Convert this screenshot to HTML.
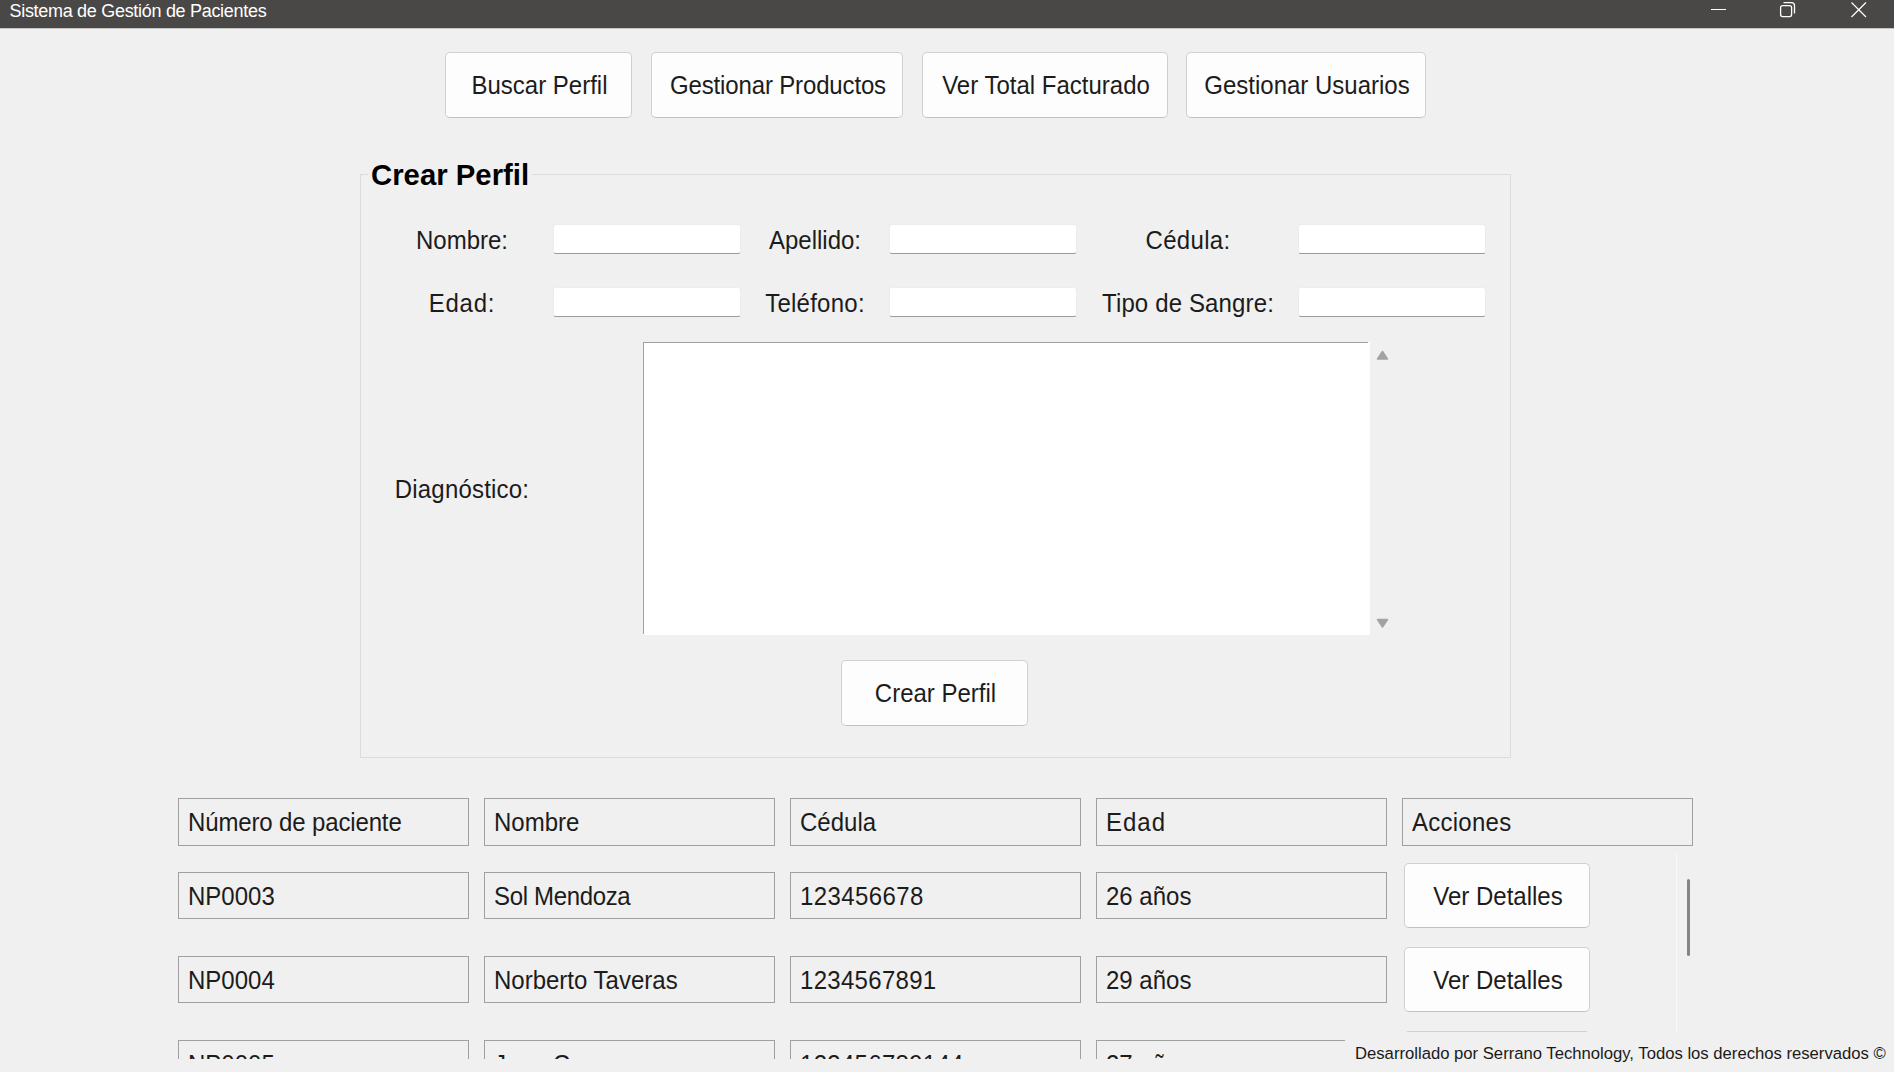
<!DOCTYPE html>
<html><head><meta charset="utf-8">
<style>
html,body{margin:0;padding:0;}
body{width:1894px;height:1072px;overflow:hidden;background:#f0f0f0;position:relative;font-family:"Liberation Sans",sans-serif;color:#000;}
.abs{position:absolute;}
#tb{left:0;top:0;width:1894px;height:28px;background:#4a4846;}
#tb .t{position:absolute;left:9.5px;top:-3px;font-size:18px;line-height:28px;color:#fff;letter-spacing:-0.3px;white-space:nowrap;}
.btn{position:absolute;box-sizing:border-box;background:#fdfdfd;border:1px solid #d0d0d0;border-bottom-color:#c2c2c2;border-radius:5px;font-size:24px;color:#1c1c1c;text-align:center;white-space:nowrap;}
.lbl{position:absolute;font-size:24px;line-height:24px;white-space:nowrap;color:#1c1c1c;}
.tf{position:absolute;box-sizing:border-box;width:188px;height:30px;background:#fff;border:1px solid #ececec;border-bottom:1px solid #9b9b9b;border-radius:3px;}
.cell{position:absolute;box-sizing:border-box;width:291px;border:1px solid #a0a0a0;font-size:24px;line-height:24px;white-space:nowrap;color:#1c1c1c;}
.cell span{position:absolute;left:9px;transform:scaleY(1.06);transform-origin:0 20.3px;}
.tx{position:relative;top:-1px;left:1px;display:inline-block;transform:scaleY(1.06);transform-origin:50% 20.3px;line-height:24px;vertical-align:middle;}
</style></head><body>
<div class="abs" style="left:0;top:28px;width:1894px;height:1px;background:#c4c4c4;"></div>
<div id="tb" class="abs"><div class="t">Sistema de Gestión de Pacientes</div>
<svg class="abs" style="left:0;top:0" width="1894" height="28">
<line x1="1711" y1="9.5" x2="1726" y2="9.5" stroke="#fff" stroke-width="1"/>
<rect x="1780.6" y="5.6" width="11" height="11" rx="2" fill="none" stroke="#fff" stroke-width="1.3"/>
<path d="M1783.5 2.6 H1791.5 Q1794.5 2.6 1794.5 5.6 V13.6" fill="none" stroke="#fff" stroke-width="1.3"/>
<path d="M1851.5 2.5 L1866 17 M1866 2.5 L1851.5 17" stroke="#fff" stroke-width="1.2"/>
</svg>
</div>

<!-- top buttons -->
<div class="btn" style="left:445px;top:52px;width:187px;height:66px;line-height:64px;"><span class="tx">Buscar Perfil</span></div>
<div class="btn" style="left:651px;top:52px;width:252px;height:66px;line-height:64px;"><span class="tx" style="letter-spacing:-0.15px">Gestionar Productos</span></div>
<div class="btn" style="left:922px;top:52px;width:246px;height:66px;line-height:64px;"><span class="tx">Ver Total Facturado</span></div>
<div class="btn" style="left:1186px;top:52px;width:240px;height:66px;line-height:64px;"><span class="tx">Gestionar Usuarios</span></div>

<!-- group box -->
<div class="abs" style="left:360px;top:174px;width:1151px;height:584px;box-sizing:border-box;border:1px solid #dcdcdc;"></div>
<div class="abs" style="left:368px;top:160px;height:30px;padding:0 3px;background:#f0f0f0;font-size:29.33px;font-weight:bold;line-height:30px;white-space:nowrap;">Crear Perfil</div>

<div class="lbl" style="left:361px;width:200px;text-align:center;top:228px;"><span class="tx">Nombre:</span></div>
<div class="lbl" style="left:714px;width:200px;text-align:center;top:228px;"><span class="tx">Apellido:</span></div>
<div class="lbl" style="left:1087px;width:200px;text-align:center;top:228px;"><span class="tx" style="letter-spacing:0.33px">Cédula:</span></div>
<div class="lbl" style="left:361px;width:200px;text-align:center;top:291px;"><span class="tx" style="letter-spacing:0.75px">Edad:</span></div>
<div class="lbl" style="left:714px;width:200px;text-align:center;top:291px;"><span class="tx" style="letter-spacing:0.25px">Teléfono:</span></div>
<div class="lbl" style="left:1087px;width:200px;text-align:center;top:291px;"><span class="tx" style="letter-spacing:0.14px">Tipo de Sangre:</span></div>
<div class="lbl" style="left:361px;width:200px;text-align:center;top:477px;"><span class="tx" style="letter-spacing:0.2px">Diagnóstico:</span></div>

<div class="tf" style="left:553px;top:224px;"></div>
<div class="tf" style="left:889px;top:224px;"></div>
<div class="tf" style="left:1298px;top:224px;"></div>
<div class="tf" style="left:553px;top:287px;"></div>
<div class="tf" style="left:889px;top:287px;"></div>
<div class="tf" style="left:1298px;top:287px;"></div>

<!-- textarea -->
<div class="abs" style="left:643px;top:342px;width:727px;height:293px;background:#fff;"></div>
<div class="abs" style="left:643px;top:342px;width:725px;height:1px;background:#a0a0a0;"></div>
<div class="abs" style="left:643px;top:342px;width:1px;height:292px;background:#a0a0a0;"></div>
<svg class="abs" style="left:1370px;top:340px" width="30" height="300">
<path d="M12.5 11.5 L17.5 19 L7.5 19 Z" fill="#a3a3a3" stroke="#a3a3a3" stroke-width="1.5" stroke-linejoin="round"/>
<path d="M7.5 279.5 L17.5 279.5 L12.5 287 Z" fill="#a3a3a3" stroke="#a3a3a3" stroke-width="1.5" stroke-linejoin="round"/>
</svg>

<div class="btn" style="left:841px;top:660px;width:187px;height:66px;line-height:64px;"><span class="tx">Crear Perfil</span></div>

<!-- table -->
<div class="cell" style="left:178px;top:798px;height:48px;"><span style="top:12px;letter-spacing:-0.14px">Número de paciente</span></div>
<div class="cell" style="left:484px;top:798px;height:48px;"><span style="top:12px">Nombre</span></div>
<div class="cell" style="left:790px;top:798px;height:48px;"><span style="top:12px">Cédula</span></div>
<div class="cell" style="left:1096px;top:798px;height:48px;"><span style="top:12px;letter-spacing:1.0px">Edad</span></div>
<div class="cell" style="left:1402px;top:798px;height:48px;"><span style="top:12px;letter-spacing:0.25px">Acciones</span></div>

<div class="cell" style="left:178px;top:872px;height:47px;"><span style="top:11.5px">NP0003</span></div>
<div class="cell" style="left:484px;top:872px;height:47px;"><span style="top:11.5px;letter-spacing:-0.34px">Sol Mendoza</span></div>
<div class="cell" style="left:790px;top:872px;height:47px;"><span style="top:11.5px;letter-spacing:0.4px">123456678</span></div>
<div class="cell" style="left:1096px;top:872px;height:47px;"><span style="top:11.5px">26 años</span></div>
<div class="btn" style="left:1404px;top:863px;width:186px;height:65px;line-height:64px;"><span class="tx">Ver Detalles</span></div>

<div class="cell" style="left:178px;top:956px;height:47px;"><span style="top:11.5px">NP0004</span></div>
<div class="cell" style="left:484px;top:956px;height:47px;"><span style="top:11.5px">Norberto Taveras</span></div>
<div class="cell" style="left:790px;top:956px;height:47px;"><span style="top:11.5px;letter-spacing:0.3px">1234567891</span></div>
<div class="cell" style="left:1096px;top:956px;height:47px;"><span style="top:11.5px">29 años</span></div>
<div class="btn" style="left:1404px;top:947px;width:186px;height:65px;line-height:63px;"><span class="tx">Ver Detalles</span></div>

<!-- clipped row 3 -->
<div class="abs" style="left:0;top:1031px;width:1894px;height:28px;overflow:hidden;">
<div class="cell" style="left:178px;top:9px;height:47px;"><span style="top:11.5px">NP0005</span></div>
<div class="cell" style="left:484px;top:9px;height:47px;"><span style="top:11.5px">Juan Cruz</span></div>
<div class="cell" style="left:790px;top:9px;height:47px;"><span style="top:11.5px;letter-spacing:0.3px">123456789144</span></div>
<div class="cell" style="left:1096px;top:9px;height:47px;"><span style="top:11.5px">27 años</span></div>
<div class="btn" style="left:1404px;top:0px;width:186px;height:65px;line-height:63px;"><span class="tx">Ver Detalles</span></div>
</div>

<!-- scroll column -->
<div class="abs" style="left:1676px;top:853px;width:1px;height:179px;background:#f9f9f9;"></div>
<div class="abs" style="left:1687px;top:879px;width:3px;height:77px;background:#858585;border-radius:1.5px;"></div>

<!-- footer -->
<div class="abs" style="left:1345px;top:1032px;width:549px;height:40px;background:#f0f0f0;"></div>
<div class="abs" style="left:1355px;top:1044px;font-size:16.67px;line-height:20px;white-space:nowrap;color:#1a1a1a;">Desarrollado por Serrano Technology, Todos los derechos reservados ©</div>
</body></html>
